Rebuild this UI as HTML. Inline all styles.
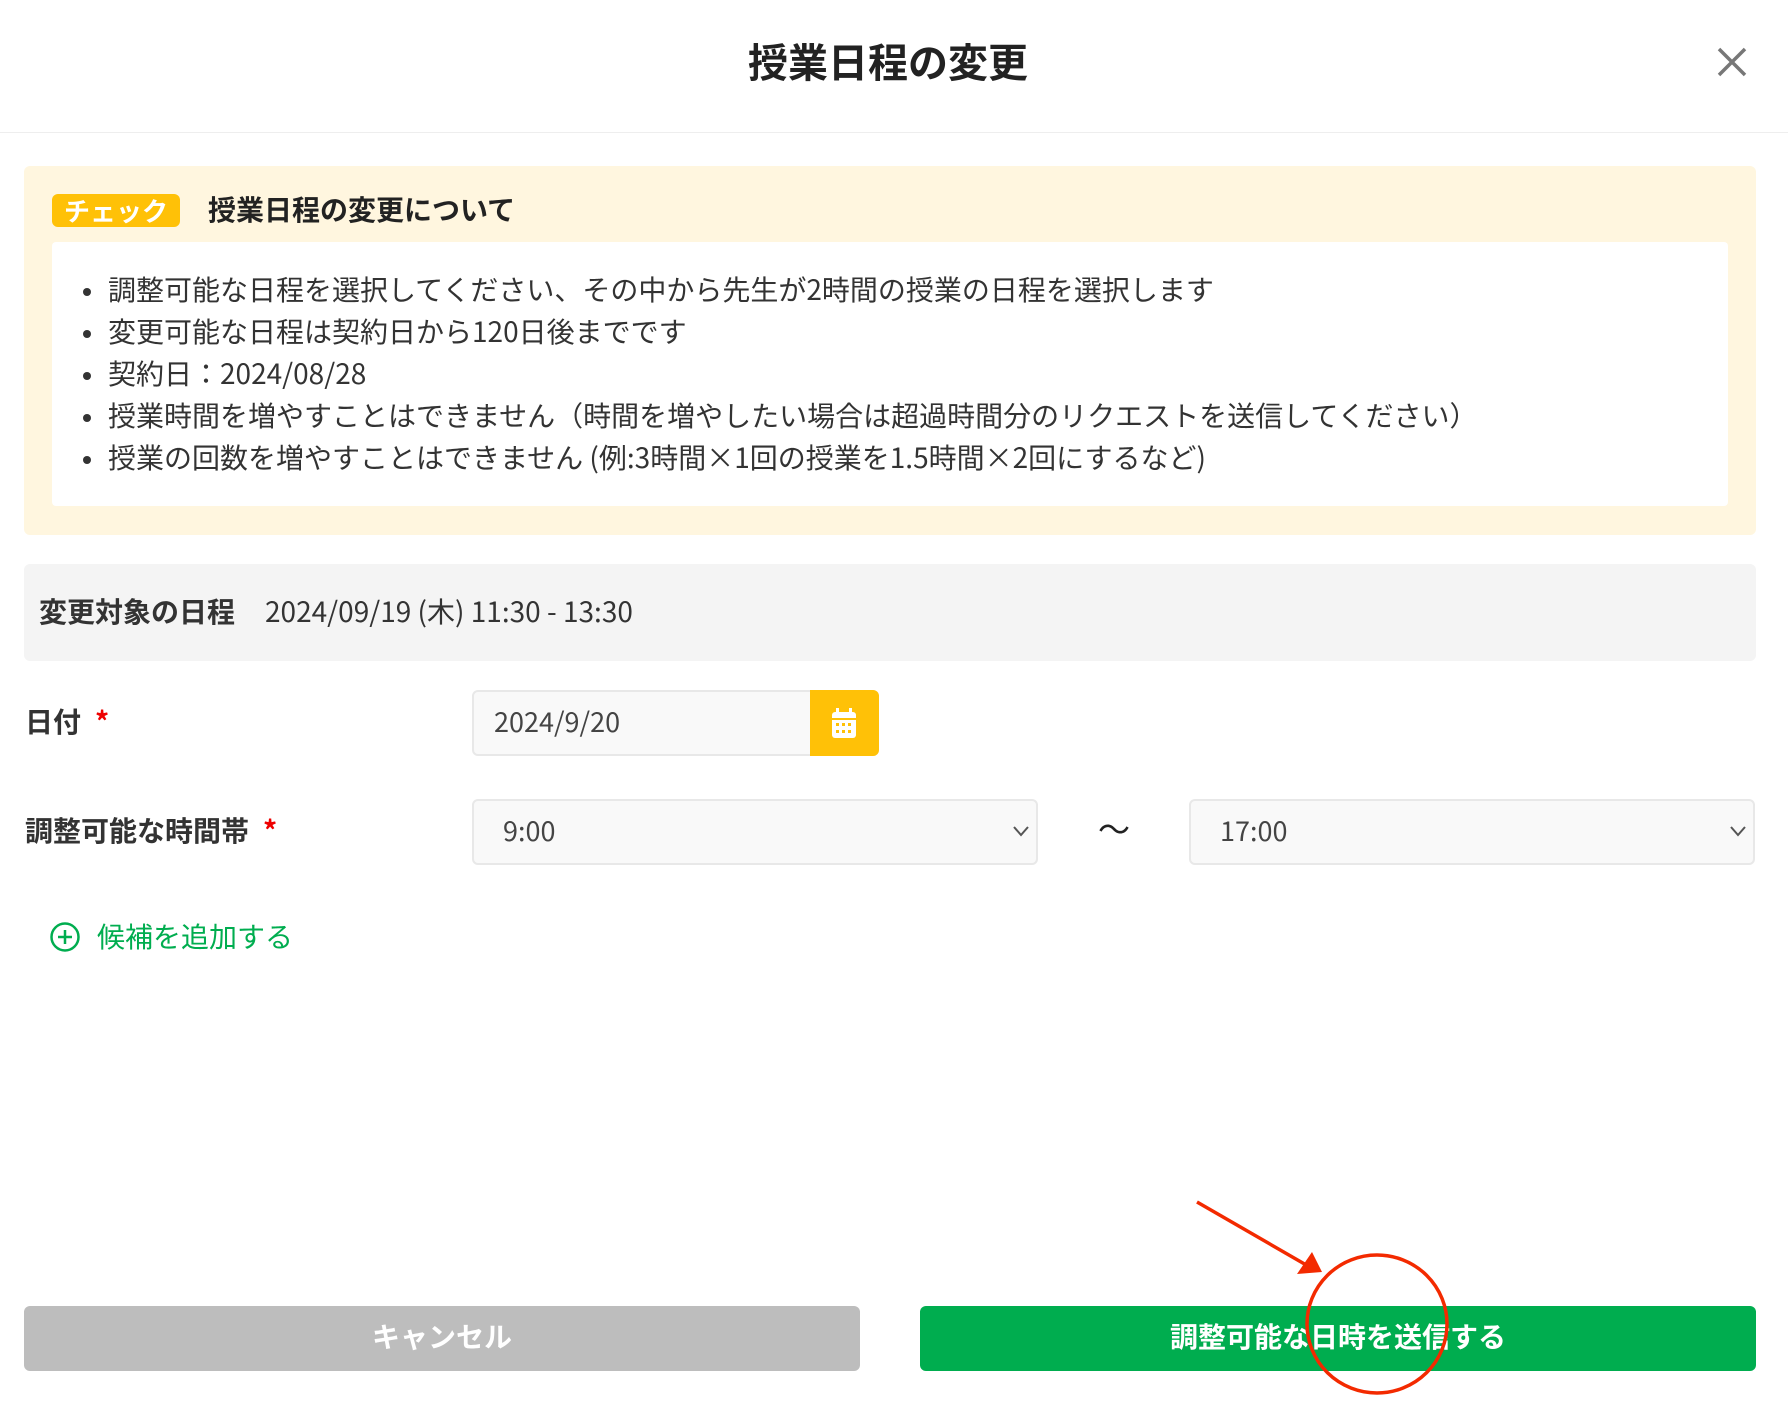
<!DOCTYPE html>
<html><head><meta charset="utf-8"><style>
*{margin:0;padding:0;box-sizing:border-box}
body{width:1788px;height:1404px;background:#fff;position:relative;overflow:hidden;font-family:"Noto Sans CJK JP","Liberation Sans",sans-serif;color:#333}
.a{position:absolute;white-space:nowrap}
.req{color:#e00;margin-left:14px}
.li{position:relative;padding-left:28px}
.li:before{content:"";position:absolute;left:3px;top:20px;width:8px;height:8px;border-radius:50%;background:#333}
</style></head><body>
<div class="a" style="left:-6px;top:33px;width:1788px;text-align:center;font-size:40px;font-weight:bold;color:#222;line-height:54px">授業日程の変更</div>
<svg class="a" style="left:1716px;top:46px" width="32" height="32"><path d="M3 3L29 29M29 3L3 29" stroke="#777" stroke-width="3.5"/></svg>
<div class="a" style="left:0;top:132px;width:1788px;height:1px;background:#eee"></div>

<div class="a" style="left:24px;top:166px;width:1732px;height:369px;background:#fff6df;border-radius:6px"></div>
<div class="a" style="left:52px;top:194px;width:128px;height:33px;background:#ffc107;border-radius:6px;color:#fff;font-weight:bold;font-size:26px;line-height:33px;text-align:center">チェック</div>
<div class="a" style="left:208px;top:189px;font-size:28px;font-weight:bold;color:#222;line-height:40px">授業日程の変更について</div>
<div class="a" style="left:52px;top:242px;width:1676px;height:264px;background:#fff;border-radius:4px"></div>
<div class="a" style="left:80px;top:268px;font-size:28px;line-height:42px;color:#333">
<div class="li">調整可能な日程を選択してください、その中から先生が2時間の授業の日程を選択します</div>
<div class="li">変更可能な日程は契約日から120日後までです</div>
<div class="li">契約日：2024/08/28</div>
<div class="li">授業時間を増やすことはできません（時間を増やしたい場合は超過時間分のリクエストを送信してください）</div>
<div class="li">授業の回数を増やすことはできません (例:3時間×1回の授業を1.5時間×2回にするなど)</div>
</div>

<div class="a" style="left:24px;top:564px;width:1732px;height:97px;background:#f4f4f4;border-radius:6px"></div>
<div class="a" style="left:39px;top:591px;font-size:28px;line-height:40px"><b>変更対象の日程</b><span style="margin-left:30px">2024/09/19 (木) 11:30 - 13:30</span></div>

<div class="a" style="left:25px;top:701px;font-size:28px;font-weight:bold;line-height:40px">日付<span class="req">*</span></div>
<div class="a" style="left:472px;top:690px;width:407px;height:66px;background:#f9f9f9;border:2px solid #e8e8e8;border-radius:6px"></div>
<div class="a" style="left:494px;top:701px;font-size:27px;line-height:40px;color:#444">2024/9/20</div>
<div class="a" style="left:810px;top:690px;width:69px;height:66px;background:#ffc107;border-radius:0 6px 6px 0"></div>
<svg class="a" style="left:830px;top:706px" width="28" height="34" viewBox="0 0 28 34"><rect x="6" y="2" width="3" height="7" fill="#fff"/><rect x="19" y="2" width="3" height="7" fill="#fff"/><rect x="2" y="6" width="24" height="26" rx="3" fill="#fff"/><rect x="2" y="12" width="24" height="2" fill="#ffc107"/><g fill="#ffc107"><rect x="6" y="17" width="3" height="3"/><rect x="12" y="17" width="3" height="3"/><rect x="18" y="17" width="3" height="3"/><rect x="6" y="24" width="3" height="3"/><rect x="12" y="24" width="3" height="3"/><rect x="18" y="24" width="3" height="3"/></g></svg>

<div class="a" style="left:25px;top:810px;font-size:28px;font-weight:bold;line-height:40px">調整可能な時間帯<span class="req">*</span></div>
<div class="a" style="left:472px;top:799px;width:566px;height:66px;background:#f9f9f9;border:2px solid #e8e8e8;border-radius:6px"></div>
<div class="a" style="left:503px;top:810px;font-size:27px;line-height:40px;color:#444">9:00</div>
<svg class="a" style="left:1012px;top:825px" width="18" height="12"><path d="M2 2L9 10L16 2" fill="none" stroke="#555" stroke-width="2"/></svg>
<div class="a" style="left:1098px;top:808px;font-size:32px;line-height:40px;color:#222">〜</div>
<div class="a" style="left:1189px;top:799px;width:566px;height:66px;background:#f9f9f9;border:2px solid #e8e8e8;border-radius:6px"></div>
<div class="a" style="left:1220px;top:810px;font-size:27px;line-height:40px;color:#444">17:00</div>
<svg class="a" style="left:1729px;top:825px" width="18" height="12"><path d="M2 2L9 10L16 2" fill="none" stroke="#555" stroke-width="2"/></svg>

<svg class="a" style="left:49px;top:921px" width="32" height="32"><circle cx="16" cy="16" r="13.5" fill="none" stroke="#00ad4f" stroke-width="2.5"/><path d="M16 9V23M9 16H23" stroke="#00ad4f" stroke-width="2.5"/></svg>
<div class="a" style="left:97px;top:916px;font-size:28px;line-height:40px;color:#00ad4f">候補を追加する</div>

<div class="a" style="left:24px;top:1306px;width:836px;height:65px;background:#bdbdbd;border-radius:6px;color:#fff;font-size:28px;font-weight:bold;line-height:60px;text-align:center">キャンセル</div>
<div class="a" style="left:920px;top:1306px;width:836px;height:65px;background:#00ad4f;border-radius:6px;color:#fff;font-size:28px;font-weight:bold;line-height:60px;text-align:center">調整可能な日時を送信する</div>

<svg class="a" style="left:0;top:0" width="1788" height="1404">
<path d="M1197 1202L1308 1266" stroke="#f32a00" stroke-width="3.5" fill="none"/>
<path d="M1312 1252L1297 1274L1322 1272Z" fill="#f32a00"/>
<ellipse cx="1377" cy="1324" rx="70" ry="69" fill="none" stroke="#f32a00" stroke-width="3.5"/>
</svg>
</body></html>
